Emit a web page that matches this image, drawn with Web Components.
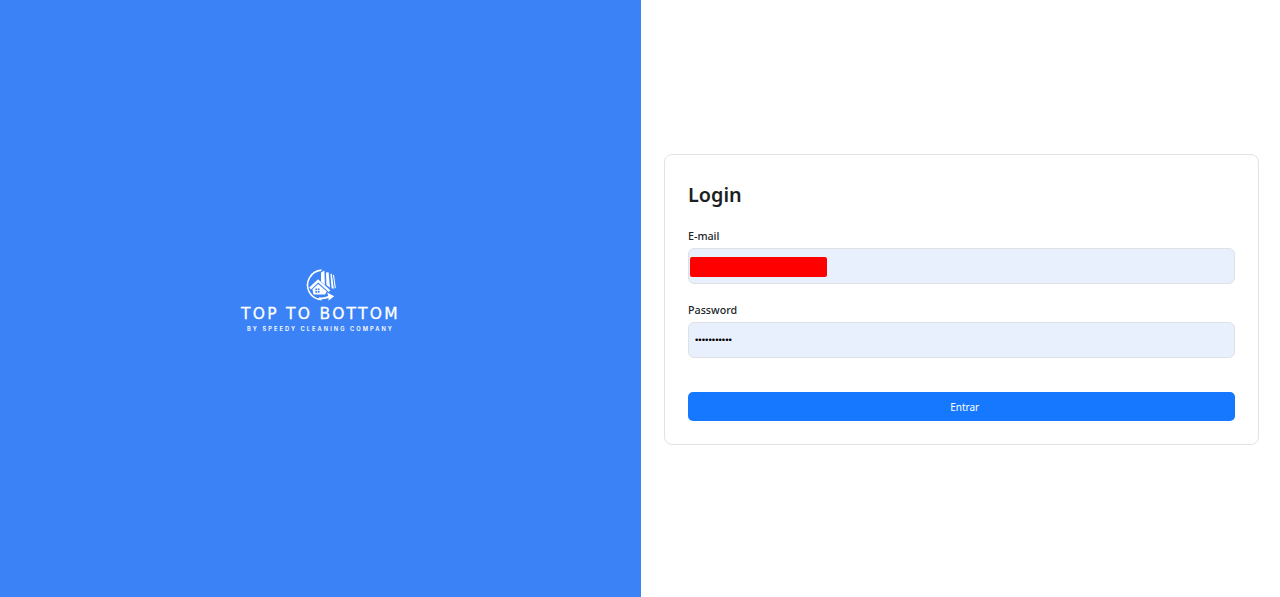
<!DOCTYPE html>
<html lang="pt">
<head>
<meta charset="utf-8">
<title>Login</title>
<style>
html, body { margin: 0; height: 100%; background: #fff; }
body { font-family: "Noto Sans", "Open Sans", sans-serif; color: #212529; overflow: hidden; }
</style>
</head>
<body>
<login-page>
    <brand-logo slot="aside"></brand-logo>
    <login-card slot="main" heading="Login">
        <form-field label="E-mail" kind="redacted"></form-field>
        <form-field label="Password" kind="password" value="•••••••••••"></form-field>
        <submit-button>Entrar</submit-button>
    </login-card>
</login-page>

<script>
class LoginPage extends HTMLElement {
    constructor() {
        super();
        this.attachShadow({ mode: 'open' }).innerHTML = `
<style>
:host { display: grid; grid-template-columns: 641px 639px; height: 597px; }
.aside { background: #3b82f6; display: flex; align-items: center; justify-content: center; }
.main { display: flex; align-items: center; padding: 1px 21px 0 23px; }
</style>
<div class="aside"><slot name="aside"></slot></div>
<div class="main"><slot name="main"></slot></div>`;
    }
}

class BrandLogo extends HTMLElement {
    constructor() {
        super();
        this.attachShadow({ mode: 'open' }).innerHTML = `
<style>
:host { display: flex; flex-direction: column; align-items: center; color: #fff; width: 161px; margin-top: 5px; }
svg { display: block; width: 30px; height: 32px; }
.name { font: 400 15.5px/18px "DejaVu Sans", Inter, sans-serif; -webkit-text-stroke: 0.3px #fff; letter-spacing: 2.28px; white-space: nowrap; margin-top: 4px; }
.sub { font: 600 5.7px/8px Inter, "Noto Sans", sans-serif; letter-spacing: 2.06px; white-space: nowrap; margin-top: 2px; }
</style>
<svg viewBox="0 0 30 32" fill="none" aria-hidden="true">
    <path d="M15.5 1.1A15 15 0 0 0 3.6 23.6C6 27.6 10 30.4 15.5 30.6" stroke="#fff" stroke-width="1.6"/>
    <path d="M13 28.2c3.2.6 6.3.2 9.2-1.2l-1-3.6 7 3.8-5.8 4.6.2-2.7c-3 1.2-6.4 1.4-9.6.6z" fill="#fff"/>
    <path d="M3.2 18.6 12 10.2l12.4 11-1.7 1.8L12.3 13.6l-7.4 6.8z" fill="#fff"/>
    <path d="M6.4 20.2l5.8-5.2 8.6 7.4-1.8 3H7.4z" fill="#fff"/>
    <path d="M9.4 19.6h1.7v1.7H9.4zM11.8 19.6h1.7v1.7h-1.7zM9.4 22h1.7v1.7H9.4zM11.8 22h1.7v1.7h-1.7z" fill="#3b82f6"/>
    <path d="M15 3.4 18.4 1.4l.5 14.6-3.9-3.4zM20 3.6l2.6-.4 1.4 15.6-3.6-2.8zM24.4 5l1.4-.2 2 15-2.2-.6zM27 6l1-.2 1.8 13.2-1 .4z" fill="#fff"/>
</svg>
<div class="name">TOP TO BOTTOM</div>
<div class="sub">BY SPEEDY CLEANING COMPANY</div>`;
    }
}

class LoginCard extends HTMLElement {
    constructor() {
        super();
        this.attachShadow({ mode: 'open' }).innerHTML = `
<style>
:host { display: block; width: 100%; box-sizing: border-box; height: 291px; border: 1px solid #e1e3e6; border-radius: 8px; background: #fff; padding: 26px 23.5px 0 23px; }
h1 { margin: 0 0 21px; font: 600 19.8px/27px "Noto Sans", sans-serif; color: #1c1f23; }
</style>
<h1></h1>
<slot></slot>`;
        this.shadowRoot.querySelector('h1').textContent = this.getAttribute('heading');
    }
}

class FormField extends HTMLElement {
    constructor() {
        super();
        this.attachShadow({ mode: 'open' }).innerHTML = `
<style>
:host { display: block; margin-bottom: 19px; }
label { display: block; font: 500 10.7px/15px "Noto Sans", sans-serif; color: #212529; margin-bottom: 4px; }
.box { box-sizing: border-box; height: 36px; border: 1px solid #dee2e6; border-radius: 6px; background: #e8f0fe; display: flex; align-items: center; }
.redacted { width: 137px; height: 20px; margin: 2px 0 0 1px; background: #ff0000; border-radius: 2px; }
.password { margin-left: 6px; font: 400 9.6px/14px "Liberation Sans", sans-serif; letter-spacing: 0; color: #000; }
</style>
<label></label>
<div class="box"></div>`;
    }

    connectedCallback() {
        this.shadowRoot.querySelector('label').textContent = this.getAttribute('label');
        const box = this.shadowRoot.querySelector('.box');
        const inner = document.createElement('span');
        inner.className = this.getAttribute('kind');
        inner.textContent = this.getAttribute('value') || '';
        box.replaceChildren(inner);
    }
}

class SubmitButton extends HTMLElement {
    constructor() {
        super();
        this.attachShadow({ mode: 'open' }).innerHTML = `
<style>
:host { display: block; margin-top: 34px; }
button { display: block; width: 100%; height: 29px; border: 0; border-radius: 5px; background: #1677ff; color: #fff; font: 400 10px/14px "Noto Sans", sans-serif; padding: 2px 0 0 7px; }
</style>
<button type="button"><slot></slot></button>`;
    }
}

customElements.define('login-page', LoginPage);
customElements.define('brand-logo', BrandLogo);
customElements.define('login-card', LoginCard);
customElements.define('form-field', FormField);
customElements.define('submit-button', SubmitButton);
</script>
</body>
</html>
